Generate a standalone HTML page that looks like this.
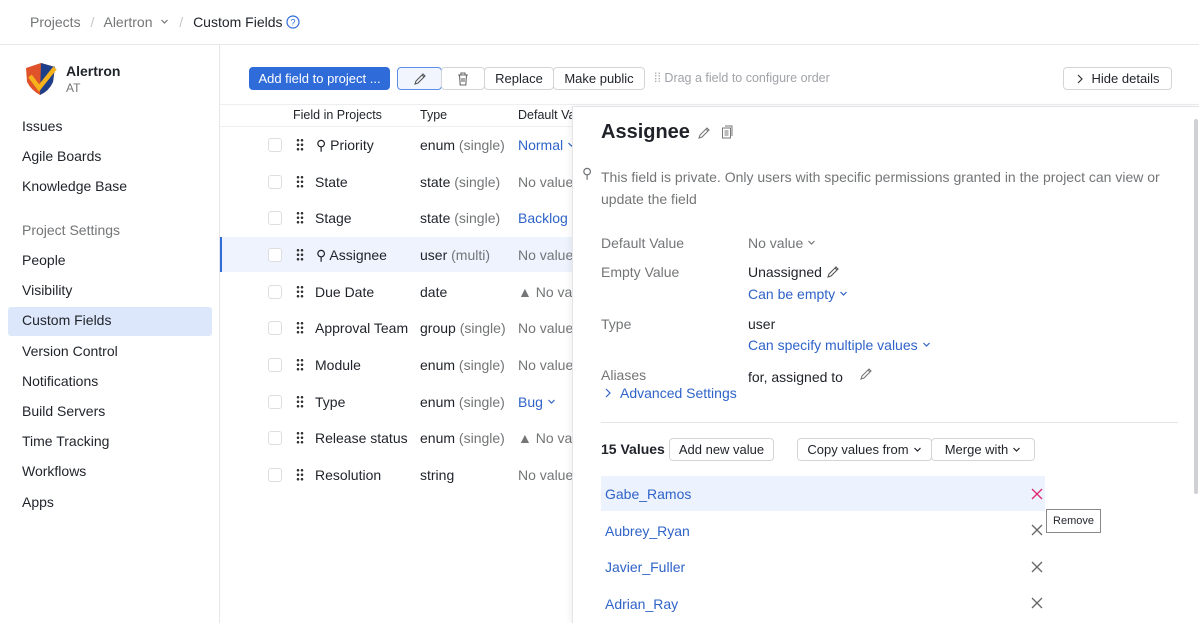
<!DOCTYPE html>
<html><head><meta charset="utf-8"><style>
*{box-sizing:border-box;margin:0;padding:0}
body{width:1199px;height:623px;overflow:hidden;font-family:"Liberation Sans",sans-serif;font-size:14px;color:#1f2329;background:#fff;position:relative}
.a{position:absolute;white-space:nowrap}
.g{color:#737577}
.b{color:#2f63c8}
.btn{position:absolute;border:1px solid #d3d5d9;border-radius:4px;height:23px;font-size:13px;display:flex;align-items:center;justify-content:center;background:#fff}
.cb{position:absolute;left:268px;width:14px;height:14px;border:1px solid #dcdee2;border-radius:3px;background:#fff}
.dots{position:absolute;left:296px;width:8px;height:13px;background-image:radial-gradient(circle,#333 1.2px,transparent 1.4px);background-size:4px 4.5px}
.cv{display:inline-block;width:9px;height:7px;margin-left:4px;vertical-align:2px}
.x{position:absolute;left:458px;width:12px;height:12px}
</style></head><body>
<svg width="0" height="0" style="position:absolute"><defs><symbol id="c" viewBox="0 0 9 7"><path d="M1.5 2l3 3 3-3" stroke="currentColor" fill="none" stroke-width="1.2"/></symbol><symbol id="xx" viewBox="0 0 12 12"><path d="M1 1l10 10M11 1L1 11" stroke="currentColor" stroke-width="1.3"/></symbol><symbol id="pen" viewBox="0 0 14 14"><path d="M2 12l1-3 7-7 2 2-7 7z M9 3l2 2" stroke="currentColor" fill="none" stroke-width="1.1"/></symbol></defs></svg>
<div class="a g" style="left:30px;top:14px;font-size:14px">Projects <span style="color:#c5c7cb;margin:0 6px">/</span> Alertron <svg class="cv" style="color:#737577"><use href="#c"/></svg> <span style="color:#c5c7cb;margin:0 6px">/</span> <span style="color:#1f2329">Custom Fields</span> <svg width="14" height="14" viewBox="0 0 14 14" style="vertical-align:-2px"><circle cx="7" cy="7" r="6" stroke="#2f6bd9" fill="none" stroke-width="1.2"/><text x="7" y="10.5" font-size="9" text-anchor="middle" fill="#2f6bd9" font-family="Liberation Sans">?</text></svg></div>
<div class="a" style="left:0;top:44px;width:1199px;height:1px;background:#e6e7ea"></div>
<div class="a" style="left:219px;top:45px;width:1px;height:578px;background:#e6e7ea"></div>
<svg class="a" style="left:23px;top:60px" width="36" height="36" viewBox="0 0 36 36"><path d="M3 8 L18 3 L32 7 L30 22 Q26 31 17 35 Q8 30 4 22Z" fill="#e0532a"/><path d="M18 3 L32 7 L30 22 Q26 31 17 35Z" fill="#1d3f8a"/><path d="M7 16 L16 28 L32 8" stroke="#f6b21a" stroke-width="4.5" fill="none"/></svg>
<div class="a" style="left:66px;top:63px;font-weight:bold;font-size:14px">Alertron</div>
<div class="a g" style="left:66px;top:81px;font-size:12px">AT</div>
<div class="a" style="left:22px;top:111px;line-height:30px">Issues<br>Agile Boards<br>Knowledge Base</div>
<div class="a g" style="left:22px;top:222px">Project Settings</div>
<div class="a" style="left:8px;top:307px;width:204px;height:29px;background:#dce7fb;border-radius:3px"></div>
<div class="a" style="left:22px;top:245px;line-height:30.2px">People<br>Visibility<br>Custom Fields<br>Version Control<br>Notifications<br>Build Servers<br>Time Tracking<br>Workflows<br>Apps</div>

<div class="btn" style="left:249px;top:67px;width:141px;background:#2f6bd9;border-color:#2f6bd9;color:#fff">Add field to project ...</div>
<div class="btn" style="left:397px;top:67px;width:45px;border-color:#5c8ee6;background:#f1f5fd;color:#555"><svg width="14" height="14"><use href="#pen"/></svg></div>
<div class="btn" style="left:441px;top:67px;width:44px"><svg width="12" height="14" viewBox="0 0 12 14"><path d="M1 3h10M4 3V1h4v2M2.5 3l.7 10h5.6l.7-10M5 6v4M7 6v4" stroke="#666" fill="none" stroke-width="1.1"/></svg></div>
<div class="btn" style="left:484px;top:67px;width:70px">Replace</div>
<div class="btn" style="left:553px;top:67px;width:92px">Make public</div>
<div class="a" style="left:654px;top:71px;font-size:12.5px;color:#a0a3a8">⁞⁞ Drag a field to configure order</div>
<div class="btn" style="left:1063px;top:67px;width:109px"><svg width="8" height="10" viewBox="0 0 8 10" style="margin-right:8px"><path d="M2 1l4 4-4 4" stroke="#333" fill="none" stroke-width="1.2"/></svg>Hide details</div>
<div class="a" style="left:220px;top:104px;width:979px;height:1px;background:#eceef0"></div>
<div class="a" style="left:220px;top:126px;width:352px;height:1px;background:#eceef0"></div>
<div class="a" style="left:293px;top:108px;font-size:12.5px">Field in Projects</div>
<div class="a" style="left:420px;top:108px;font-size:12.5px">Type</div>
<div class="a" style="left:518px;top:108px;font-size:12.5px">Default Va</div>
<div class="a" style="left:220px;top:237px;width:352px;height:35px;background:#eef3fd"></div>
<div class="a" style="left:220px;top:237px;width:2px;height:35px;background:#2f6bd9"></div>

<div class="cb" style="top:138px"></div><div class="dots" style="top:138px"></div><div class="a" style="left:316px;top:137px">⚲ Priority</div><div class="a" style="left:420px;top:137px">enum <span class="g">(single)</span></div><div class="a b" style="left:518px;top:137px">Normal<svg class="cv"><use href="#c"/></svg></div>
<div class="cb" style="top:175px"></div><div class="dots" style="top:175px"></div><div class="a" style="left:315px;top:174px">State</div><div class="a" style="left:420px;top:174px">state <span class="g">(single)</span></div><div class="a g" style="left:518px;top:174px">No value</div>
<div class="cb" style="top:211px"></div><div class="dots" style="top:211px"></div><div class="a" style="left:315px;top:210px">Stage</div><div class="a" style="left:420px;top:210px">state <span class="g">(single)</span></div><div class="a b" style="left:518px;top:210px">Backlog</div>
<div class="cb" style="top:248px"></div><div class="dots" style="top:248px"></div><div class="a" style="left:316px;top:247px">⚲ Assignee</div><div class="a" style="left:420px;top:247px">user <span class="g">(multi)</span></div><div class="a g" style="left:518px;top:247px">No value</div>
<div class="cb" style="top:285px"></div><div class="dots" style="top:285px"></div><div class="a" style="left:315px;top:284px">Due Date</div><div class="a" style="left:420px;top:284px">date</div><div class="a g" style="left:518px;top:284px">▲ No val</div>
<div class="cb" style="top:321px"></div><div class="dots" style="top:321px"></div><div class="a" style="left:315px;top:320px">Approval Team</div><div class="a" style="left:420px;top:320px">group <span class="g">(single)</span></div><div class="a g" style="left:518px;top:320px">No value</div>
<div class="cb" style="top:358px"></div><div class="dots" style="top:358px"></div><div class="a" style="left:315px;top:357px">Module</div><div class="a" style="left:420px;top:357px">enum <span class="g">(single)</span></div><div class="a g" style="left:518px;top:357px">No value</div>
<div class="cb" style="top:395px"></div><div class="dots" style="top:395px"></div><div class="a" style="left:315px;top:394px">Type</div><div class="a" style="left:420px;top:394px">enum <span class="g">(single)</span></div><div class="a b" style="left:518px;top:394px">Bug<svg class="cv"><use href="#c"/></svg></div>
<div class="cb" style="top:431px"></div><div class="dots" style="top:431px"></div><div class="a" style="left:315px;top:430px">Release status</div><div class="a" style="left:420px;top:430px">enum <span class="g">(single)</span></div><div class="a g" style="left:518px;top:430px">▲ No val</div>
<div class="cb" style="top:468px"></div><div class="dots" style="top:468px"></div><div class="a" style="left:315px;top:467px">Resolution</div><div class="a" style="left:420px;top:467px">string</div><div class="a g" style="left:518px;top:467px">No value</div>

<div class="a" style="left:572px;top:106px;width:627px;height:517px;background:#fff;border-left:1px solid #e3e5e8;border-top:1px solid #e3e5e8;box-shadow:-2px 0 6px rgba(0,0,0,.06);overflow:hidden">
<div class="a" style="left:28px;top:14px;font-size:20px;font-weight:bold">Assignee</div>
<svg class="a" style="left:124px;top:19px;color:#777" width="14" height="14"><use href="#pen"/></svg>
<svg class="a" style="left:148px;top:18px" width="13" height="14" viewBox="0 0 13 14"><rect x="1.5" y="3" width="8" height="10" stroke="#777" fill="none"/><path d="M4 1h7v10M3.5 6h4M3.5 8h4M3.5 10h4" stroke="#777" fill="none"/></svg>
<div class="a g" style="left:9px;top:58px">⚲</div>
<div class="a g" style="left:28px;top:59px;line-height:22px;white-space:normal;width:580px">This field is private. Only users with specific permissions granted in the project can view or update the field</div>
<div class="a g" style="left:28px;top:128px">Default Value</div><div class="a g" style="left:175px;top:128px">No value<svg class="cv"><use href="#c"/></svg></div>
<div class="a g" style="left:28px;top:157px">Empty Value</div><div class="a" style="left:175px;top:157px">Unassigned <svg width="14" height="14" style="color:#555;vertical-align:-2px"><use href="#pen"/></svg></div>
<div class="a b" style="left:175px;top:179px">Can be empty<svg class="cv"><use href="#c"/></svg></div>
<div class="a g" style="left:28px;top:209px">Type</div><div class="a" style="left:175px;top:209px">user</div>
<div class="a b" style="left:175px;top:230px">Can specify multiple values<svg class="cv"><use href="#c"/></svg></div>
<div class="a g" style="left:28px;top:260px">Aliases</div><div class="a" style="left:175px;top:260px">for, assigned to &nbsp;&nbsp;&nbsp;<svg width="14" height="14" style="color:#777;vertical-align:1px"><use href="#pen"/></svg></div>
<div class="a b" style="left:31px;top:278px"><svg width="8" height="10" viewBox="0 0 8 10" style="margin-right:8px"><path d="M2 1l4 4-4 4" stroke="#2f63c8" fill="none" stroke-width="1.2"/></svg>Advanced Settings</div>
<div class="a" style="left:28px;top:315px;width:577px;height:1px;background:#e3e5e8"></div>
<div class="a" style="left:28px;top:334px;font-weight:bold">15 Values</div>
<div class="btn" style="left:96px;top:331px;width:105px">Add new value</div>
<div class="btn" style="left:224px;top:331px;width:135px">Copy values from<svg class="cv"><use href="#c"/></svg></div>
<div class="btn" style="left:358px;top:331px;width:104px">Merge with<svg class="cv"><use href="#c"/></svg></div>
<div class="a" style="left:28px;top:369px;width:444px;height:35px;background:#ecf2fe"></div>
<div class="a b" style="left:32px;top:379px">Gabe_Ramos</div>
<div class="a b" style="left:32px;top:416px">Aubrey_Ryan</div>
<div class="a b" style="left:32px;top:452px">Javier_Fuller</div>
<div class="a b" style="left:32px;top:489px">Adrian_Ray</div>
<svg class="x" style="top:381px;color:#e0286f"><use href="#xx"/></svg>
<svg class="x" style="top:417px;color:#666"><use href="#xx"/></svg>
<svg class="x" style="top:454px;color:#666"><use href="#xx"/></svg>
<svg class="x" style="top:490px;color:#666"><use href="#xx"/></svg>
<div class="a" style="left:473px;top:402px;width:55px;height:24px;border:1px solid #888;background:#fff;font-size:11px;display:flex;align-items:center;justify-content:center">Remove</div>
<div class="a" style="left:621px;top:12px;width:4px;height:375px;background:#cfd1d4;border-radius:2px"></div>
</div>
</body></html>
